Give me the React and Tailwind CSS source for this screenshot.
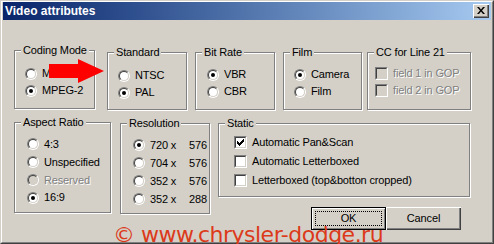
import React from "react";

const Radio = ({ checked, disabled }) => {
    return (
        <span className="flex h-[12px] w-[12px] shrink-0 items-center justify-center rounded-full border border-t-[#808080] border-l-[#808080] border-r-white border-b-white">
            <span
                className={
                    "flex h-[10px] w-[10px] items-center justify-center rounded-full border border-t-[#404040] border-l-[#404040] border-r-[#d4d0c8] border-b-[#d4d0c8] " +
                    (disabled ? "bg-[#d4d0c8]" : "bg-white")
                }
            >
                {checked && <span className="h-[4px] w-[4px] rounded-full bg-black" />}
            </span>
        </span>
    );
};

const Check = ({ checked, disabled }) => {
    return (
        <span className="flex h-[13px] w-[13px] shrink-0 border border-t-[#808080] border-l-[#808080] border-r-white border-b-white">
            <span
                className={
                    "flex h-[11px] w-[11px] items-center justify-center border border-t-[#404040] border-l-[#404040] border-r-[#d4d0c8] border-b-[#d4d0c8] " +
                    (disabled ? "bg-[#d4d0c8]" : "bg-white")
                }
            >
                {checked && (
                    <svg width="7" height="7" viewBox="0 0 7 7">
                        <path d="M0 2h1v1h1v1h1V3h1V2h1V1h1V0h1v3H6v1H5v1H4v1H3v1H2V6H1V5H0z" fill="#000" />
                    </svg>
                )}
            </span>
        </span>
    );
};

const Group = ({ title, className, children }) => {
    return (
        <fieldset className={"border border-[#808080] shadow-[inset_1px_1px_0_#fff,1px_1px_0_#fff] " + className}>
            <legend className="ml-[6px] bg-[#d4d0c8] px-[2px] leading-[13px]">{title}</legend>
            {children}
        </fieldset>
    );
};

const disabledText = "text-[#808080] [text-shadow:1px_1px_0_#fff]";

const App = () => {
    return (
        <div className="relative h-[244px] w-[494px] overflow-hidden bg-[#d4d0c8] font-['Liberation_Sans',Arial,sans-serif] text-[11px] leading-[13px] tracking-[-0.15px] text-black">
            <div className="flex h-full flex-col border border-t-[#d4d0c8] border-l-[#d4d0c8] border-r-[#404040] border-b-[#404040]">
                <div className="flex h-full flex-col border border-t-white border-l-white border-r-[#808080] border-b-[#808080] px-[1px]">
                    {/* title bar */}
                    <div className="flex h-[18px] items-center bg-linear-to-r from-[#0a246a] to-[#a6caf0] pl-[2px] pr-[2px]">
                        <span className="flex-1 pt-[1px] text-[12px] font-bold leading-[17px] tracking-normal text-white">Video attributes</span>
                        <span className="flex h-[14px] w-[16px] items-center justify-center bg-[#d4d0c8] shadow-[inset_1px_1px_0_#fff,inset_-1px_-1px_0_#404040,inset_-2px_-2px_0_#808080]">
                            <svg width="8" height="7" viewBox="0 0 8 7" className="-mt-[1px]">
                                <path d="M0 0h2l2 2.5L6 0h2L5 3.5 8 7H6L4 4.5 2 7H0l3-3.5z" fill="#000" />
                            </svg>
                        </span>
                    </div>

                    <div className="flex flex-1 flex-col pl-[11px] pt-[24px]">
                        <div className="flex items-start">
                            <Group title="Coding Mode" className="h-[65px] w-[81px]">
                                <div className="flex flex-col pl-[10px] pt-[8px]">
                                    <div className="flex h-[17px] items-center gap-[5px]"><Radio />M</div>
                                    <div className="flex h-[17px] items-center gap-[5px]"><Radio checked />MPEG-2</div>
                                </div>
                            </Group>
                            <Group title="Standard" className="ml-[12px] mt-[2px] h-[64px] w-[80px]">
                                <div className="flex flex-col pl-[10px] pt-[8px]">
                                    <div className="flex h-[17px] items-center gap-[5px]"><Radio />NTSC</div>
                                    <div className="flex h-[17px] items-center gap-[5px]"><Radio checked />PAL</div>
                                </div>
                            </Group>
                            <Group title="Bit Rate" className="ml-[8px] mt-[2px] h-[64px] w-[80px]">
                                <div className="flex flex-col pl-[11px] pt-[7px]">
                                    <div className="flex h-[17px] items-center gap-[5px]"><Radio checked />VBR</div>
                                    <div className="flex h-[17px] items-center gap-[5px]"><Radio />CBR</div>
                                </div>
                            </Group>
                            <Group title="Film" className="ml-[8px] mt-[2px] h-[64px] w-[79px]">
                                <div className="flex flex-col pl-[10px] pt-[7px]">
                                    <div className="flex h-[17px] items-center gap-[5px]"><Radio checked />Camera</div>
                                    <div className="flex h-[17px] items-center gap-[5px]"><Radio />Film</div>
                                </div>
                            </Group>
                            <Group title="CC for Line 21" className="ml-[5px] mt-[2px] h-[64px] w-[104px]">
                                <div className="flex flex-col pl-[7px] pt-[6px]">
                                    <div className={"flex h-[17px] items-center gap-[5px] " + disabledText}><Check disabled />field 1 in GOP</div>
                                    <div className={"flex h-[17px] items-center gap-[5px] " + disabledText}><Check disabled />field 2 in GOP</div>
                                </div>
                            </Group>
                        </div>

                        <div className="mt-[6px] flex items-start">
                            <Group title="Aspect Ratio" className="h-[97px] w-[97px]">
                                <div className="flex flex-col pl-[12px] pt-[6px]">
                                    <div className="flex h-[18px] items-center gap-[5px]"><Radio />4:3</div>
                                    <div className="flex h-[18px] items-center gap-[5px]"><Radio />Unspecified</div>
                                    <div className={"flex h-[18px] items-center gap-[5px] " + disabledText}><Radio disabled />Reserved</div>
                                    <div className="flex h-[17px] items-center gap-[5px]"><Radio checked />16:9</div>
                                </div>
                            </Group>
                            <Group title="Resolution" className="ml-[9px] mt-[1px] h-[97px] w-[90px]">
                                <div className="flex flex-col pl-[12px] pt-[6px]">
                                    {[["720", "576", true], ["704", "576"], ["352", "576"], ["352", "288"]].map(([w, h, on], i) => (
                                        <div key={i} className="flex h-[18px] items-center gap-[5px]">
                                            <Radio checked={on} />
                                            <span className="w-[34px]">{w} x</span>
                                            <span>{h}</span>
                                        </div>
                                    ))}
                                </div>
                            </Group>
                            <div className="ml-[8px] mt-[1px] flex flex-col">
                                <Group title="Static" className="h-[80px] w-[252px]">
                                    <div className="flex flex-col pl-[15px] pt-[3px]">
                                        <div className="flex h-[19px] items-center gap-[5px]"><Check checked />Automatic Pan&amp;Scan</div>
                                        <div className="flex h-[19px] items-center gap-[5px]"><Check />Automatic Letterboxed</div>
                                        <div className="flex h-[19px] items-center gap-[5px]"><Check />Letterboxed (top&amp;botton cropped)</div>
                                    </div>
                                </Group>
                                <div className="mt-[10px] flex pl-[93px]">
                                    <button className="flex h-[23px] w-[75px] border border-black bg-[#d4d0c8] p-[3px] shadow-[inset_1px_1px_0_#fff,inset_-1px_-1px_0_#808080]">
                                        <span className="flex flex-1 items-center justify-center border border-dotted border-black">OK</span>
                                    </button>
                                    <button className="flex h-[23px] w-[75px] items-center justify-center bg-[#d4d0c8] shadow-[inset_1px_1px_0_#fff,inset_-1px_-1px_0_#404040,inset_-2px_-2px_0_#808080]">
                                        Cancel
                                    </button>
                                </div>
                            </div>
                        </div>
                    </div>
                </div>
            </div>

            {/* red arrow pointing at Standard */}
            <svg className="absolute left-[49px] top-[59px]" width="56" height="25" viewBox="0 0 56 25">
                <rect x="0" y="5" width="30" height="14" fill="#f00" />
                <polygon points="29,0 55,12 29,24" fill="#f00" />
            </svg>

            <div className="absolute left-[113px] top-[224px] whitespace-nowrap font-['DejaVu_Sans',sans-serif] text-[22px] leading-[22px] tracking-[-0.5px] text-[#dc3a1a]">
                © www.chrysler-dodge.ru
            </div>
        </div>
    );
};

export default App;
